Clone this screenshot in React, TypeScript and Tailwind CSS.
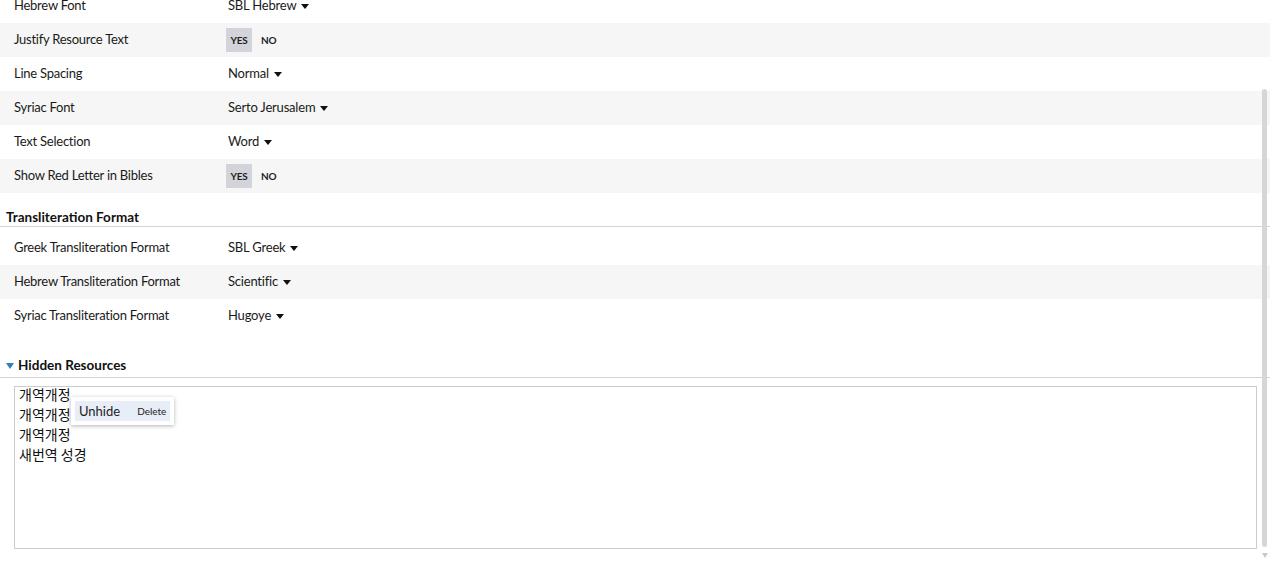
import React from "react";

const font = { fontFamily: "Lato, 'Noto Sans CJK KR', sans-serif" };

function Caret() {
  return (
    <svg width="8" height="5" viewBox="0 0 8 5" className="ml-[5px] mt-[1px]">
      <path d="M0 0 L8 0 L4 5 Z" fill="#111" />
    </svg>
  );
}

function Row({ label, shaded, children }: { label: string; shaded?: boolean; children: React.ReactNode }) {
  return (
    <div className={`flex h-[34px] items-center ${shaded ? "bg-[#f6f6f6]" : ""}`}>
      <div className="w-[228px] pl-[14px] text-[13px] tracking-[-0.25px] text-[#1a1a1a]">{label}</div>
      <div className="flex items-center text-[13px] tracking-[-0.2px] text-[#1a1a1a]">{children}</div>
    </div>
  );
}

function Drop({ v }: { v: string }) {
  return (
    <>
      <span>{v}</span>
      <Caret />
    </>
  );
}

function YesNo() {
  return (
    <div className="-ml-[2px] flex items-center text-[10px] font-bold text-[#1e1e1e]">
      <span className="flex h-[24px] w-[26px] items-center justify-center bg-[#d3d4d9]">YES</span>
      <span className="ml-[9px]">NO</span>
    </div>
  );
}

export default function App() {
  return (
    <div className="relative h-[563px] w-[1270px] overflow-hidden bg-white" style={font}>
      <div className="-mt-[11px]">
        <Row label="Hebrew Font"><Drop v="SBL Hebrew" /></Row>
        <Row label="Justify Resource Text" shaded><YesNo /></Row>
        <Row label="Line Spacing"><Drop v="Normal" /></Row>
        <Row label="Syriac Font" shaded><Drop v="Serto Jerusalem" /></Row>
        <Row label="Text Selection"><Drop v="Word" /></Row>
        <Row label="Show Red Letter in Bibles" shaded><YesNo /></Row>

        <div className="border-b border-[#d4d4d4] pl-[6px] pt-[16px] pb-0 text-[13.5px] font-bold leading-[17px] text-[#111]">
          Transliteration Format
        </div>
        <div className="pt-[4px]">
          <Row label="Greek Transliteration Format"><Drop v="SBL Greek" /></Row>
          <Row label="Hebrew Transliteration Format" shaded><Drop v="Scientific" /></Row>
          <Row label="Syriac Transliteration Format"><Drop v="Hugoye" /></Row>
        </div>

        <div className="mt-[24px] flex items-center border-b border-[#d4d4d4] pb-[3px] pl-[6px] text-[13.5px] font-bold leading-[17px] text-[#111]">
          <svg width="8" height="6" viewBox="0 0 8 6" className="mr-[4px]">
            <path d="M0 0 L8 0 L4 6 Z" fill="#2f7fc1" />
          </svg>
          Hidden Resources
        </div>

        <div className="relative ml-[14px] mt-[8px] h-[163px] w-[1243px] border border-[#cccccc] bg-white pl-[4px] text-[14px] leading-[20px] text-[#111]" style={{ fontFamily: "'Noto Sans CJK KR', sans-serif" }}>
          <div className="-mt-[3px]">
            <div>개역개정</div>
            <div>개역개정</div>
            <div>개역개정</div>
            <div>새번역 성경</div>
          </div>
          <div className="absolute left-[56px] top-[10px] h-[28px] w-[103px] bg-white p-[4px] shadow-[0_1px_4px_rgba(0,0,0,0.3)]" style={font}>
            <div className="flex h-[20px] items-center bg-[#e8eef7] pl-[4px] text-[#222]">
              <span className="text-[13px]">Unhide</span>
              <span className="ml-[17px] text-[10px]">Delete</span>
            </div>
          </div>
        </div>
      </div>

      <div className="absolute left-[1262px] top-[89px] h-[458px] w-[5px] rounded-full bg-[#d6d6d6]" />
      <svg width="6" height="5" viewBox="0 0 6 5" className="absolute left-[1262px] top-[553px]">
        <path d="M0 0 L6 0 L3 5 Z" fill="#c8c8c8" />
      </svg>
    </div>
  );
}
